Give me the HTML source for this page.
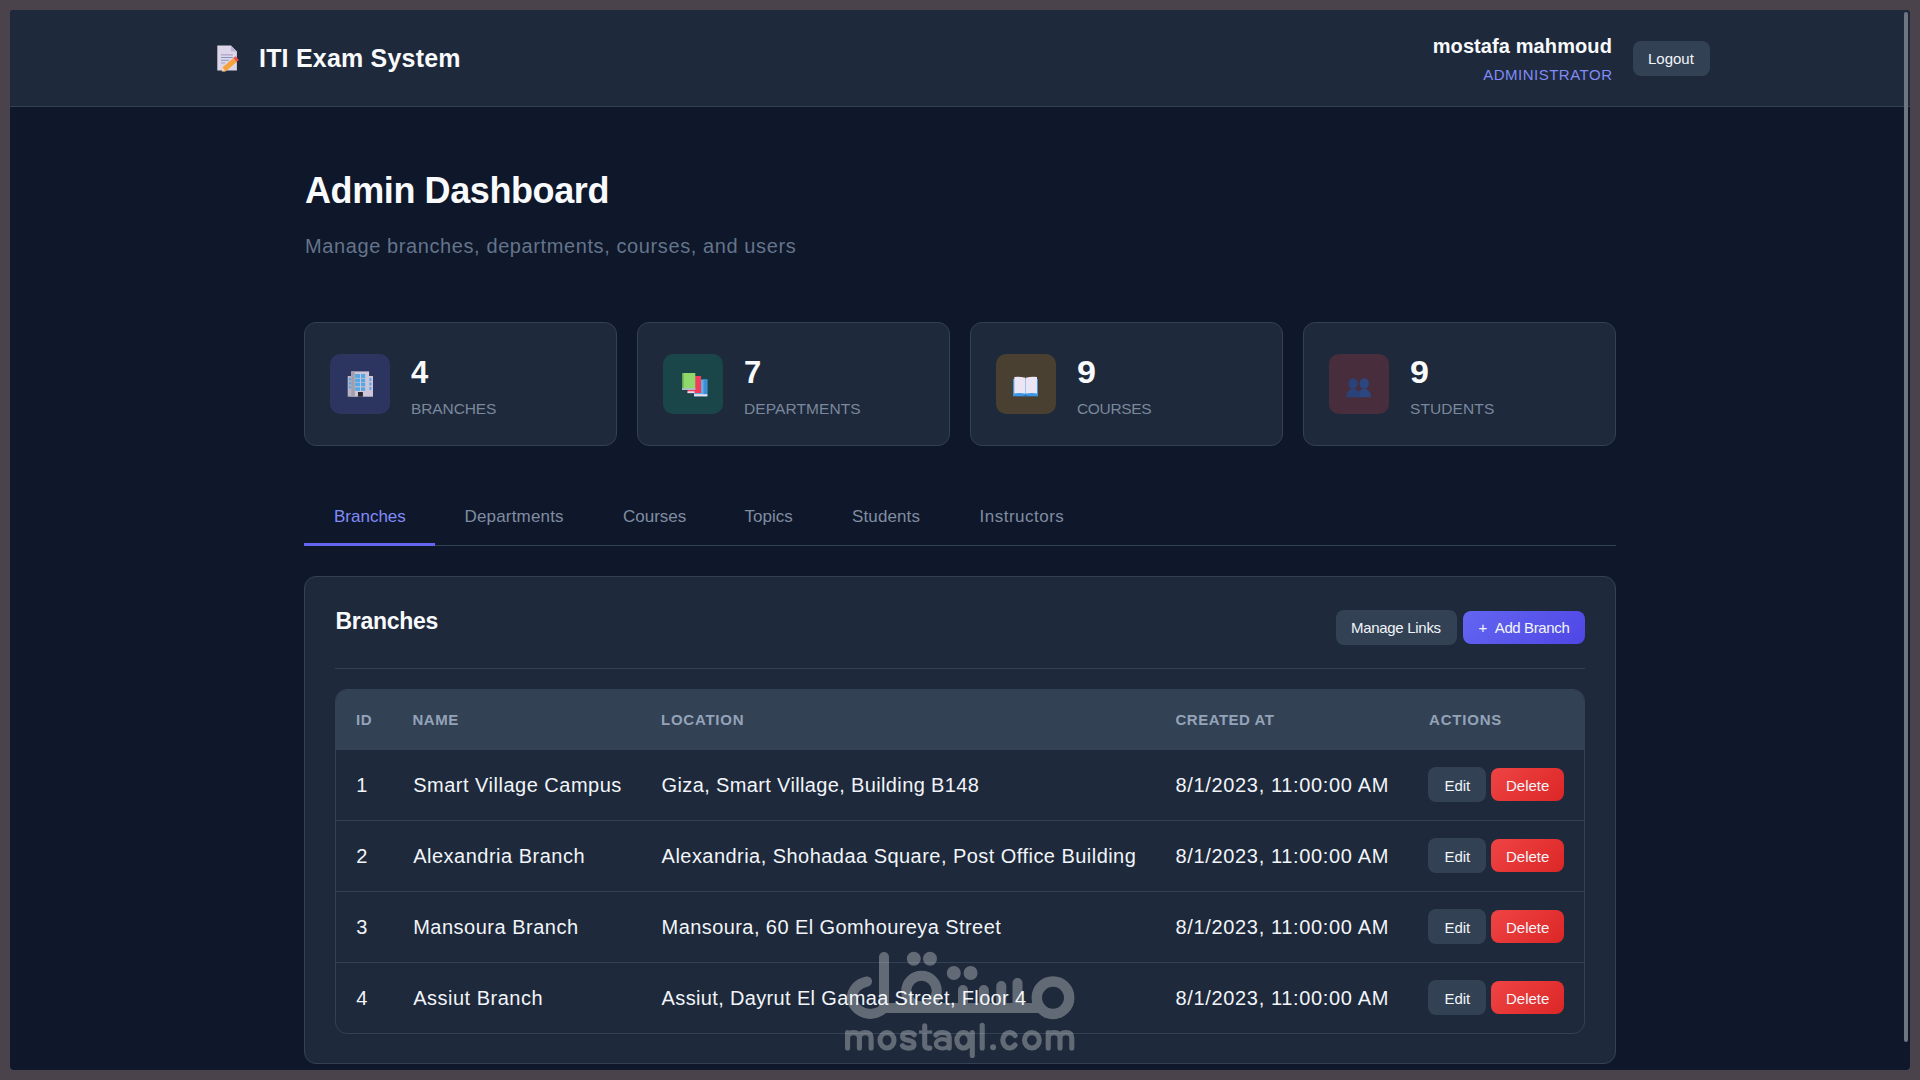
<!DOCTYPE html>
<html><head><meta charset="utf-8">
<style>
*{margin:0;padding:0;box-sizing:border-box}
html,body{width:1920px;height:1080px;overflow:hidden;background:#4a434b;font-family:"Liberation Sans",sans-serif}
#win{position:absolute;left:10px;top:10px;width:1900px;height:1060px;background:#0f172a;border-radius:4px;overflow:hidden}
.a{position:absolute;white-space:nowrap}
#hdr{position:absolute;left:0;top:0;width:1900px;height:97px;background:#1e293b;border-bottom:1px solid #334155}
.card{position:absolute;background:#1e293b;border:1px solid #334155;border-radius:12px}
.ibox{position:absolute;width:60px;height:60px;border-radius:10px}
.num{position:absolute;font-weight:bold;font-size:31px;line-height:31px;color:#f8fafc}
.lbl{position:absolute;font-size:15.5px;line-height:15.5px;color:#7a889d;letter-spacing:0.1px}
.tab{position:absolute;font-size:17px;line-height:17px;color:#808da1}
.btn{position:absolute;border-radius:8px;color:#f1f5f9;font-size:15px;line-height:15px}
.btn span{position:absolute;white-space:nowrap}
.sec{background:#334155}
.th{position:absolute;font-weight:bold;font-size:15px;line-height:15px;color:#94a3b8;letter-spacing:0.5px}
.td{position:absolute;font-size:20px;line-height:20px;color:#f1f5f9;letter-spacing:0.4px;white-space:nowrap}
.red{background:linear-gradient(135deg,#ef4444,#dc2626)}
</style></head><body>
<div id="win">
  <div id="hdr"></div>
  <!-- logo memo emoji -->
  <svg class="a" style="left:205px;top:33px" width="30" height="32" viewBox="215 43 30 32">
    <path d="M217.3 45.4 H230.9 L236.9 51.4 V70.6 H217.3 Z" fill="#ddd6e8"/>
    <path d="M230.9 45.4 V51.4 H236.9 Z" fill="#bfb3d4"/>
    <rect x="221" y="54" width="11.8" height="1.6" fill="#b8acd0"/>
    <rect x="221" y="57" width="11.8" height="1" fill="#8094bc"/>
    <rect x="221" y="59.8" width="8" height="0.9" fill="#8094bc"/>
    <rect x="221" y="62.3" width="4" height="1.4" fill="#b8acd0"/>
    <path d="M222.4 67.6 L233.4 58.1 L236.6 61.9 L225.6 71.4 Z" fill="#f7a33b"/>
    <path d="M233.4 58.1 L235.6 56.2 L238.9 60 L236.6 61.9 Z" fill="#ee4d4d"/>
    <path d="M222.4 67.6 L225.6 71.4 L221.6 71.6 Z" fill="#f3d7a8"/>
    <path d="M221.2 70.2 L222.2 70.9 L221.5 71.7 Z" fill="#3a2a2a"/>
  </svg>
  <div class="a" style="left:249px;top:35.7px;font-size:25px;line-height:25px;font-weight:bold;color:#f8fafc;letter-spacing:0.2px">ITI Exam System</div>
  <div class="a" style="right:298px;top:26.2px;font-size:20px;line-height:20px;font-weight:bold;color:#f8fafc;letter-spacing:0.1px">mostafa mahmoud</div>
  <div class="a" style="right:297.5px;top:57.3px;font-size:15px;line-height:15px;color:#818cf8;letter-spacing:0.5px">ADMINISTRATOR</div>
  <div class="btn sec" style="left:1623px;top:31px;width:77px;height:35px"><span style="left:15px;top:10.3px">Logout</span></div>

  <!-- title -->
  <div class="a" style="left:295px;top:162.5px;font-size:36px;line-height:36px;font-weight:bold;color:#f8fafc;letter-spacing:-0.4px">Admin Dashboard</div>
  <div class="a" style="left:295px;top:226px;font-size:20px;line-height:20px;color:#64748b;letter-spacing:0.6px">Manage branches, departments, courses, and users</div>

  <!-- stat cards -->
  <div class="card" style="left:294px;top:312px;width:313px;height:124px"></div>
  <div class="card" style="left:627px;top:312px;width:313px;height:124px"></div>
  <div class="card" style="left:960px;top:312px;width:313px;height:124px"></div>
  <div class="card" style="left:1293px;top:312px;width:313px;height:124px"></div>

  <div class="ibox" style="left:320px;top:344px;background:#2c355f"></div>
  <div class="ibox" style="left:653px;top:344px;background:#1b4649"></div>
  <div class="ibox" style="left:986px;top:344px;background:#494031"></div>
  <div class="ibox" style="left:1319px;top:344px;background:#482e3d"></div>

  <div class="num" style="left:401px;top:346.9px">4</div>
  <div class="num" style="left:734px;top:346.9px">7</div>
  <div class="num" style="left:1067px;top:346.9px;transform:scaleX(1.1);transform-origin:0 0">9</div>
  <div class="num" style="left:1400px;top:346.9px;transform:scaleX(1.1);transform-origin:0 0">9</div>
  <div class="lbl" style="left:401px;top:391px;letter-spacing:-0.1px">BRANCHES</div>
  <div class="lbl" style="left:734px;top:391px">DEPARTMENTS</div>
  <div class="lbl" style="left:1067px;top:391px;letter-spacing:-0.35px">COURSES</div>
  <div class="lbl" style="left:1400px;top:391px">STUDENTS</div>


  <!-- building -->
  <svg class="a" style="left:335px;top:359px" width="30" height="30" viewBox="345 369 30 30">
    <rect x="347.7" y="376" width="4" height="20.7" fill="#b8b2c4"/>
    <rect x="368.6" y="376" width="4.4" height="20.7" fill="#cfc6dc"/>
    <rect x="351.2" y="371.4" width="17.9" height="25.3" fill="#cdc5da"/>
    <rect x="351.2" y="371.4" width="3.6" height="25.3" fill="#a29eaa"/>
    <g fill="#55a8e4">
      <rect x="355.1" y="374" width="4.9" height="3.9"/><rect x="361" y="374" width="4.2" height="3.9"/>
      <rect x="355.1" y="378.6" width="4.9" height="3.8"/><rect x="361" y="378.6" width="4.2" height="3.8"/>
      <rect x="355.1" y="383" width="4.9" height="3.3"/><rect x="361" y="383" width="4.2" height="3.3"/>
      <rect x="355.1" y="387.3" width="4.9" height="3.5"/><rect x="361" y="387.3" width="4.2" height="3.5"/>
      <rect x="349" y="378" width="2" height="2.6"/><rect x="349" y="382" width="2" height="2.6"/><rect x="349" y="386" width="2" height="2.6"/>
      <rect x="369.4" y="378" width="2" height="3"/><rect x="369.4" y="382.5" width="2" height="3"/><rect x="369.4" y="387" width="2" height="3"/>
    </g>
    <rect x="358" y="392" width="4.9" height="4.7" fill="#2a2630"/>
  </svg>
  <!-- books -->
  <svg class="a" style="left:668px;top:361px" width="30" height="30" viewBox="678 371 30 30">
    <rect x="694" y="379.5" width="13.3" height="16.8" fill="#62b0e6"/>
    <rect x="703.5" y="379.5" width="3.8" height="16.8" fill="#3c8fd6"/>
    <rect x="694" y="394.2" width="13.3" height="2.1" fill="#e6e0ee"/>
    <rect x="687.5" y="376" width="13.6" height="17.1" fill="#f23c5c"/>
    <rect x="687.5" y="391.3" width="7" height="1.8" fill="#e6e0ee"/>
    <rect x="682" y="373" width="13.3" height="16.9" fill="#8fd96c"/>
    <rect x="682" y="373" width="1.6" height="15.5" fill="#6aa84f"/>
    <rect x="682" y="388.2" width="13.3" height="1.7" fill="#b0b8d4"/>
  </svg>
  <!-- open book -->
  <svg class="a" style="left:1001px;top:364px" width="40" height="36" viewBox="1011 374 40 36">
    <path d="M1013 379 H1038 V396.3 H1013 Z" fill="#3b97e6"/>
    <path d="M1014.3 376.9 Q1020 376.2 1025.4 377.8 V393.6 Q1020 392.6 1014.3 393.4 Z" fill="#ece6f4"/>
    <path d="M1025.7 377.8 Q1031 376.2 1037 376.9 V393.4 Q1031 392.6 1025.7 393.6 Z" fill="#ece6f4"/>
    <path d="M1024 395 H1027.5 L1025.7 397.2 Z" fill="#1f6fc0"/>
  </svg>
  <!-- busts -->
  <svg class="a" style="left:1334px;top:366px" width="30" height="34" viewBox="1344 376 30 34">
    <g fill="#2c467f">
      <ellipse cx="1364.2" cy="383.6" rx="4.6" ry="5.4"/>
      <path d="M1357 397.3 Q1357.5 389.5 1364.2 388.8 Q1371 389.5 1371 397.3 Z"/>
    </g>
    <g fill="#29427a">
      <ellipse cx="1353.2" cy="383.6" rx="4.6" ry="5.4"/>
      <path d="M1346.4 397.3 Q1346.8 389.5 1353.2 388.8 Q1360 389.5 1360.5 397.3 Z"/>
    </g>
  </svg>
  <!-- tabs -->
  <div class="a" style="left:294px;top:535px;width:1312px;height:1px;background:#334155"></div>
  <div class="a" style="left:294px;top:533px;width:131px;height:3px;background:#6366f1"></div>
  <div class="tab" style="left:324px;top:497.5px;color:#818cf8">Branches</div>
  <div class="tab" style="left:454.5px;top:497.5px;letter-spacing:0.18px">Departments</div>
  <div class="tab" style="left:613px;top:497.5px">Courses</div>
  <div class="tab" style="left:734.5px;top:497.5px">Topics</div>
  <div class="tab" style="left:842px;top:497.5px;letter-spacing:0.12px">Students</div>
  <div class="tab" style="left:969.5px;top:497.5px;letter-spacing:0.5px">Instructors</div>

  <!-- main card -->
  <div class="card" style="left:294px;top:566px;width:1312px;height:488px"></div>
  <div class="a" style="left:325.5px;top:600.3px;font-size:23px;line-height:23px;font-weight:bold;color:#f8fafc;letter-spacing:-0.3px">Branches</div>
  <div class="btn sec" style="left:1326px;top:600px;width:121px;height:35px"><span style="left:15px;top:10.4px;letter-spacing:-0.3px">Manage Links</span></div>
  <div class="btn" style="left:1453px;top:601px;width:122px;height:33px;background:linear-gradient(135deg,#6366f1,#4f46e5)"><span style="left:15.5px;top:9.4px">+<span style="position:static;margin-left:7.5px;letter-spacing:-0.38px">Add Branch</span></span></div>
  <div class="a" style="left:325px;top:658px;width:1250px;height:1px;background:#334155"></div>

  <!-- table -->
  <div class="a" style="left:325px;top:679px;width:1250px;height:345px;border:1px solid #334155;border-radius:12px;overflow:hidden">
    <div class="a" style="left:0;top:0;width:1250px;height:60px;background:#334155"></div>
    <div class="a" style="left:0;top:130px;width:1249px;height:1px;background:#334155"></div>
    <div class="a" style="left:0;top:201px;width:1249px;height:1px;background:#334155"></div>
    <div class="a" style="left:0;top:272px;width:1249px;height:1px;background:#334155"></div>
  </div>
  <div class="th" style="left:346px;top:702.3px">ID</div>
  <div class="th" style="left:402.5px;top:702.3px">NAME</div>
  <div class="th" style="left:651px;top:702.3px;letter-spacing:0.75px">LOCATION</div>
  <div class="th" style="left:1165.5px;top:702.3px">CREATED AT</div>
  <div class="th" style="left:1419px;top:702.3px;letter-spacing:0.8px">ACTIONS</div>

  <div class="td" style="left:346.3px;top:765.0px">1</div>
  <div class="td" style="letter-spacing:0.5px;left:403.2px;top:765.0px">Smart Village Campus</div>
  <div class="td" style="letter-spacing:0.36px;left:651.6px;top:765.0px">Giza, Smart Village, Building B148</div>
  <div class="td" style="left:1165.6px;letter-spacing:0.65px;top:765.0px">8/1/2023, 11:00:00 AM</div>
  <div class="btn sec" style="left:1418px;top:757px;width:58px;height:35px"><span style="left:16.4px;top:11.4px">Edit</span></div>
  <div class="btn red" style="left:1481px;top:758px;width:73px;height:33px"><span style="left:15px;top:10.4px">Delete</span></div>
  <div class="td" style="left:346.3px;top:835.9px">2</div>
  <div class="td" style="letter-spacing:0.5px;left:403.2px;top:835.9px">Alexandria Branch</div>
  <div class="td" style="letter-spacing:0.46px;left:651.6px;top:835.9px">Alexandria, Shohadaa Square, Post Office Building</div>
  <div class="td" style="left:1165.6px;letter-spacing:0.65px;top:835.9px">8/1/2023, 11:00:00 AM</div>
  <div class="btn sec" style="left:1418px;top:828px;width:58px;height:35px"><span style="left:16.4px;top:11.4px">Edit</span></div>
  <div class="btn red" style="left:1481px;top:829px;width:73px;height:33px"><span style="left:15px;top:10.4px">Delete</span></div>
  <div class="td" style="left:346.3px;top:906.8px">3</div>
  <div class="td" style="letter-spacing:0.5px;left:403.2px;top:906.8px">Mansoura Branch</div>
  <div class="td" style="letter-spacing:0.42px;left:651.6px;top:906.8px">Mansoura, 60 El Gomhoureya Street</div>
  <div class="td" style="left:1165.6px;letter-spacing:0.65px;top:906.8px">8/1/2023, 11:00:00 AM</div>
  <div class="btn sec" style="left:1418px;top:899px;width:58px;height:35px"><span style="left:16.4px;top:11.4px">Edit</span></div>
  <div class="btn red" style="left:1481px;top:900px;width:73px;height:33px"><span style="left:15px;top:10.4px">Delete</span></div>
  <div class="td" style="left:346.3px;top:977.7px">4</div>
  <div class="td" style="letter-spacing:0.5px;left:403.2px;top:977.7px">Assiut Branch</div>
  <div class="td" style="letter-spacing:0.35px;left:651.6px;top:977.7px">Assiut, Dayrut El Gamaa Street, Floor 4</div>
  <div class="td" style="left:1165.6px;letter-spacing:0.65px;top:977.7px">8/1/2023, 11:00:00 AM</div>
  <div class="btn sec" style="left:1418px;top:970px;width:58px;height:35px"><span style="left:16.4px;top:11.4px">Edit</span></div>
  <div class="btn red" style="left:1481px;top:971px;width:73px;height:33px"><span style="left:15px;top:10.4px">Delete</span></div>

  <!-- watermark -->
  <svg class="a" style="left:820px;top:930px" width="270" height="130" viewBox="830 940 270 130">
    <g opacity="0.30" fill="none" stroke="#ffffff" stroke-width="10" stroke-linecap="round">
      <path d="M884 957 V1008"/>
      <path d="M867 981.5 A19.5 16.5 0 0 0 870 1014 Q880 1013 884 1008 H1040"/>
      <circle cx="921.5" cy="991" r="15.3"/>
      <path d="M963 990 V1008 M983.8 990 V1008 M1001.3 986 V1008 M1017.5 983 V1008"/>
      <circle cx="1053" cy="997.7" r="16.2" stroke-width="10.5"/>
      <g stroke="none" fill="#ffffff">
        <circle cx="913.8" cy="958.8" r="7"/><circle cx="930" cy="958.8" r="7"/>
        <circle cx="953.8" cy="973" r="7"/><circle cx="970.6" cy="973" r="7"/>

      </g>
        <path d="M847.6 1048 V1032.6 M847.6 1038 Q847.6 1032.6 853.5 1032.6 Q859.4 1032.6 859.4 1038 V1048 M859.4 1038 Q859.4 1032.6 865.3 1032.6 Q871.1 1032.6 871.1 1038 V1048 M914.2 1034.8 Q912.5 1032.5 908.3 1032.5 Q902.6 1032.5 902.6 1036.4 Q902.6 1039.4 908.3 1040.3 Q914 1041.2 914 1044.4 Q914 1048.1 908.3 1048.1 Q903.8 1048.1 902.4 1045.6 M924.7 1025.7 V1044.5 Q924.7 1048.1 928.4 1048.1 H929.8 M936 1035 Q938.3 1032.5 942 1032.5 Q949.2 1032.5 949.2 1037.5 V1048 M972.3 1032.6 V1055.5 M982.2 1025.3 V1048 M1015.05 1035.56 A6.85 7.7 0 1 0 1015.05 1045.04 M1048.2 1048 V1032.6 M1048.2 1038 Q1048.2 1032.6 1054.1 1032.6 Q1060.0 1032.6 1060.0 1038 V1048 M1060.0 1038 Q1060.0 1032.6 1065.9 1032.6 Q1071.8 1032.6 1071.8 1038 V1048" stroke-width="5.1" stroke-linejoin="round"/>
        <ellipse cx="887" cy="1040.3" rx="7" ry="7.7" stroke-width="5.1"/>
        <ellipse cx="942.5" cy="1043.8" rx="6.6" ry="4.7" stroke-width="4.2"/>
        <ellipse cx="963.5" cy="1040.3" rx="6.6" ry="7.7" stroke-width="5.1"/>
        <ellipse cx="1031.9" cy="1040.3" rx="7.4" ry="7.7" stroke-width="5.1"/>
        <rect x="919" y="1030.4" width="13.2" height="3" fill="#ffffff" stroke="none"/>
        <circle cx="993.1" cy="1047.2" r="3" fill="#ffffff" stroke="none"/>
    </g>
  </svg>
  <!-- scrollbar -->
  <div class="a" style="left:1894px;top:2px;width:4px;height:1030px;border-radius:2px;background:#6f7581"></div>
</div>
</body></html>
